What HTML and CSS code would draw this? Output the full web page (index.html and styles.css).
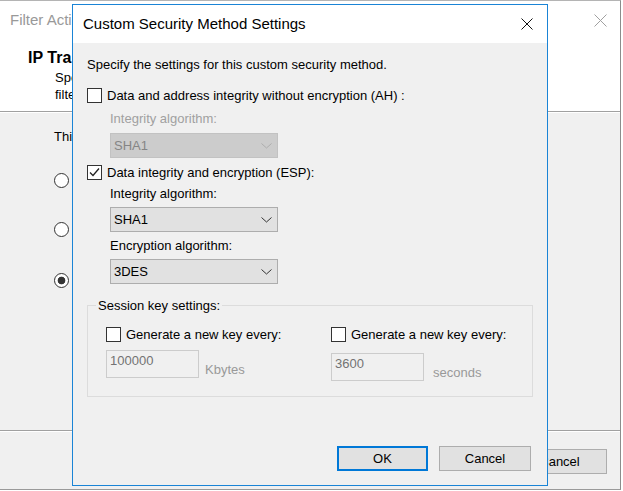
FILE: index.html
```html
<!DOCTYPE html>
<html lang="en">
<head>
  <meta charset="UTF-8" />
  <meta name="viewport" content="width=device-width, initial-scale=1.0"/>
  <title>Custom Security Method Settings</title>
  <link rel="stylesheet" href="styles.css">
</head>
<body>

  <!-- wizard window behind the dialog: only what shows left of the dialog is written -->
  <div class="wizard">
    <div class="wiz-head">
      <div class="wiz-titlebar">
        <span>Filter Acti</span>
        <svg width="13" height="13" viewBox="0 0 13 13"><path d="M0.5 0.5 L12.5 12.5 M12.5 0.5 L0.5 12.5" stroke="#a0a0a0" stroke-width="1" fill="none"/></svg>
      </div>
      <h2 class="wiz-heading">IP Tra</h2>
      <p class="wiz-desc">Spe<br>filte</p>
    </div>

    <div class="wiz-body">
      <p class="wiz-text">Thi</p>
      <div class="option"><span class="radio"></span></div>
      <div class="option"><span class="radio"></span></div>
      <div class="option last"><span class="radio on"></span></div>
    </div>

    <div class="wiz-foot">
      <button class="btn wiz-cancel">Cancel</button>
    </div>
  </div>

  <!-- the dialog -->
  <div class="dialog">
    <div class="dlg-titlebar">
      <span>Custom Security Method Settings</span>
      <svg width="12" height="12" viewBox="0 0 12 12"><path d="M0.5 0.5 L11.5 11.5 M11.5 0.5 L0.5 11.5" stroke="#111" stroke-width="1" fill="none"/></svg>
    </div>

    <div class="dlg-body">
      <p class="intro">Specify the settings for this custom security method.</p>

      <label class="check check-first"><span class="box"></span>Data and address integrity without encryption (AH) :</label>
      <div class="sub sub-ah">
        <div class="field-label is-disabled">Integrity algorithm:</div>
        <div class="select is-disabled">
          <span>SHA1</span>
          <svg width="11" height="6" viewBox="0 0 11 6"><polyline points="0.5,0.5 5.5,5 10.5,0.5" stroke="#adadad" fill="none"/></svg>
        </div>
      </div>

      <label class="check"><span class="box"><svg width="13" height="13" viewBox="0 0 13 13"><polyline points="2,6.5 5,9.5 11,2.5" stroke="#222" stroke-width="1.3" fill="none"/></svg></span>Data integrity and encryption (ESP):</label>
      <div class="sub">
        <div class="field-label">Integrity algorithm:</div>
        <div class="select">
          <span>SHA1</span>
          <svg width="11" height="6" viewBox="0 0 11 6"><polyline points="0.5,0.5 5.5,5 10.5,0.5" stroke="#333" fill="none"/></svg>
        </div>
        <div class="field-label">Encryption algorithm:</div>
        <div class="select">
          <span>3DES</span>
          <svg width="11" height="6" viewBox="0 0 11 6"><polyline points="0.5,0.5 5.5,5 10.5,0.5" stroke="#333" fill="none"/></svg>
        </div>
      </div>

      <fieldset class="keys">
        <legend>Session key settings:</legend>
        <div class="key-grid">
          <div class="key-col">
            <label class="check"><span class="box"></span>Generate a new key every:</label>
            <div class="key-row">
              <div class="key-input">100000</div>
              <span class="unit">Kbytes</span>
            </div>
          </div>
          <div class="key-col">
            <label class="check"><span class="box"></span>Generate a new key every:</label>
            <div class="key-row low">
              <div class="key-input">3600</div>
              <span class="unit sec">seconds</span>
            </div>
          </div>
        </div>
      </fieldset>
    </div>

    <div class="dlg-buttons">
      <button class="btn ok">OK</button>
      <button class="btn cancel">Cancel</button>
    </div>
  </div>

</body>
</html>
```

FILE: styles.css
```css
* {
  box-sizing: border-box;
}

body {
  margin: 0;
  width: 623px;
  height: 491px;
  overflow: hidden;
  position: relative;
  background: #fff;
  font-family: "Liberation Sans", Arial, sans-serif;
  font-size: 13px;
  line-height: 15px;
  color: #000;
}

p {
  margin: 0;
}

.btn {
  font-family: inherit;
  font-size: 13px;
  color: #000;
  background: #e1e1e1;
  border: 1px solid #adadad;
  height: 25px;
  padding: 0;
}

/* background wizard */
.wizard {
  width: 621px;
  height: 490px;
  border-top: 1px solid #b4b4b4;
  border-right: 1px solid #8c8c8c;
  border-bottom: 1px solid #9a9a9a;
  background: #f0f0f0;
  display: flex;
  flex-direction: column;
}

.wiz-head {
  height: 111px;
  flex: none;
  background: #fff;
  border-bottom: 1px solid #a0a0a0;
  padding-top: 10px;
}

.wiz-titlebar {
  display: flex;
  justify-content: space-between;
  align-items: center;
  height: 18px;
  padding: 0 13px 0 10px;
  font-size: 15px;
  line-height: 18px;
  color: #999;
}

.wiz-heading {
  margin: 20px 0 0 28px;
  font-size: 16px;
  line-height: 18px;
}

.wiz-desc {
  margin: 2px 0 0 55px;
  line-height: 17px;
}

.wiz-body {
  flex: 1;
  border-top: 1px solid #fff;
  border-bottom: 1px solid #a0a0a0;
  padding: 15px 0 0 54px;
}

.wiz-text {
  line-height: 17px;
}

.option {
  height: 34px;
  padding-top: 1px;
  margin-top: 27px;
}

.option + .option {
  margin-top: 15px;
}

.option.last {
  margin-top: 17px;
}

.radio {
  display: block;
  width: 15px;
  height: 15px;
  border: 1px solid #333;
  border-radius: 50%;
  background: #fff;
}

.radio.on {
  background: radial-gradient(circle, #333 3.5px, #fff 4.2px);
}

.wiz-foot {
  height: 58px;
  flex: none;
  border-top: 1px solid #fff;
  padding: 17px 13px 0 0;
  display: flex;
  justify-content: flex-end;
  align-items: flex-start;
}

.wiz-cancel {
  width: 95px;
}

/* dialog */
.dialog {
  position: absolute;
  left: 72px;
  top: 4px;
  width: 476px;
  height: 482px;
  border: 1px solid #1a84d6;
  background: #f0f0f0;
  display: flex;
  flex-direction: column;
}

.dlg-titlebar {
  height: 38px;
  flex: none;
  background: #fff;
  display: flex;
  align-items: center;
  justify-content: space-between;
  padding: 0 14px 0 10px;
  font-size: 15px;
  line-height: 18px;
}

.dlg-body {
  padding: 14px 14px 0;
}

.check {
  display: flex;
  align-items: flex-start;
  gap: 5px;
  margin-top: 7px;
}

.check-first {
  margin-top: 16px;
}

.box {
  width: 15px;
  height: 15px;
  flex: none;
  border: 1px solid #333;
  background: #fff;
}

.box svg {
  display: block;
}

.sub {
  padding-left: 23px;
}

.field-label {
  margin-top: 6px;
}

.field-label.is-disabled {
  color: #a0a0a0;
}

.select {
  width: 168px;
  height: 25px;
  margin-top: 6px;
  display: flex;
  align-items: center;
  justify-content: space-between;
  padding: 0 5px 0 3px;
  background: #e1e1e1;
  border: 1px solid #adadad;
}

.select.is-disabled {
  background: #cccccc;
  border-color: #c2c2c2;
  color: #858585;
}

.sub-ah .field-label {
  margin-top: 8px;
}

.sub-ah .select {
  margin-top: 7px;
}

.keys {
  margin: 14px 0 0;
  padding: 14px 0 15px 18px;
  border: 1px solid #dcdcdc;
  min-width: 0;
}

.keys legend {
  margin-left: -10px;
  padding: 0 2px;
  line-height: 15px;
}

.key-grid {
  display: grid;
  grid-template-columns: 225px 1fr;
}

.key-col .check {
  margin-top: 0;
}

.key-row {
  display: flex;
  align-items: flex-end;
  margin-top: 8px;
}

.key-row.low {
  margin-top: 11px;
}

.key-input {
  width: 93px;
  height: 28px;
  padding: 2px 3px;
  border: 1px solid #cccccc;
  background: #f0f0f0;
  color: #737373;
}

.unit {
  margin: 0 0 1px 6px;
  color: #999;
}

.unit.sec {
  margin-left: 9px;
}

.dlg-buttons {
  margin-top: auto;
  display: flex;
  justify-content: flex-end;
  gap: 11px;
  padding: 0 16px 14px 0;
}

.btn.ok {
  width: 91px;
  border: 2px solid #0078d7;
}

.btn.cancel {
  width: 92px;
}
```
